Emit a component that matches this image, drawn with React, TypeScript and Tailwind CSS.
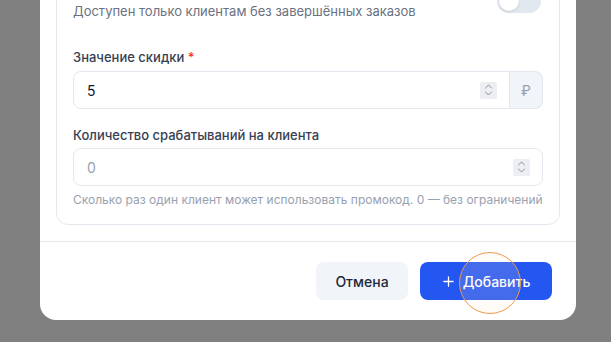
import React from "react";

function Spinner() {
  return (
    <div className="flex h-[17px] w-[17px] flex-col items-center justify-center rounded-[2px] bg-[#eceef2]">
      <svg width="9" height="14" viewBox="0 0 9 14" fill="none" stroke="#8b8f99" strokeWidth="1" strokeLinecap="round" strokeLinejoin="round">
        <path d="M1.5 5 L4.5 2 L7.5 5" />
        <path d="M1.5 9 L4.5 12 L7.5 9" />
      </svg>
    </div>
  );
}

export default function App() {
  return (
    <div
      className="relative h-[342px] w-[611px] overflow-hidden bg-[#808080]"
      style={{ fontFamily: "Inter, 'Noto Sans', sans-serif" }}
    >
      <div className="ml-[40px] mt-[-60px] w-[536px] rounded-b-2xl bg-white">
        <div className="p-4">
          <div className="rounded-xl border border-[#e3e8ef] px-4 pb-4 pt-4">
            <div className="mt-2 flex items-center justify-between">
              <div>
                <div className="text-[14px] leading-5 font-medium text-gray-800">Только для новых клиентов</div>
                <div className="text-[13px] leading-5 text-gray-500">Доступен только клиентам без завершённых заказов</div>
              </div>
              <div className="relative mr-[2px] h-6 w-11 rounded-full bg-[#e2e8f0]">
                <div className="absolute left-[2px] top-[2px] h-5 w-5 rounded-full bg-white shadow" />
              </div>
            </div>

            <div className="mt-[26px]">
              <div className="mb-1 text-[13px] leading-5 font-medium text-gray-700">
                Значение скидки <span className="text-red-500">*</span>
              </div>
              <div className="flex h-[38px]">
                <div className="flex flex-1 items-center rounded-l-lg border border-[#e3e8ef] pl-[13px] pr-3">
                  <span className="flex-1 text-[14px] text-gray-900">5</span>
                  <Spinner />
                </div>
                <div className="flex w-[33px] items-center justify-center rounded-r-lg border border-l-0 border-[#e3e8ef] bg-[#f1f4f8] text-[14px] text-gray-400">
                  ₽
                </div>
              </div>
            </div>

            <div className="mt-4">
              <div className="mb-[3px] text-[13px] leading-5 font-medium text-gray-700">
                Количество срабатываний на клиента
              </div>
              <div className="flex h-[38px] items-center rounded-lg border border-[#e3e8ef] pl-[13px] pr-3">
                <span className="flex-1 text-[14px] text-gray-400">0</span>
                <Spinner />
              </div>
              <div className="mt-1.5 text-[12px] leading-4 text-gray-400">
                Сколько раз один клиент может использовать промокод. 0 — без ограничений
              </div>
            </div>
          </div>
        </div>
        <div className="flex justify-end gap-3 border-t border-[#e3e8ef] px-6 py-5">
          <button className="h-[38px] w-[92px] rounded-lg bg-[#f1f4f8] text-[14px] font-medium text-gray-800">
            Отмена
          </button>
          <button className="flex h-[38px] w-[132px] items-center justify-center gap-2 rounded-lg bg-[#2456f2] text-[14px] font-medium text-white">
            <svg width="13" height="13" viewBox="0 0 14 14" fill="none" stroke="white" strokeWidth="1.4" strokeLinecap="round">
              <path d="M7 2v10M2 7h10" />
            </svg>
            Добавить
          </button>
        </div>
      </div>
      <div className="absolute left-[459px] top-[252px] h-[62px] w-[62px] rounded-full border-[1.5px] border-[#ee9a4c] bg-[rgba(255,230,200,0.15)]" />
    </div>
  );
}
